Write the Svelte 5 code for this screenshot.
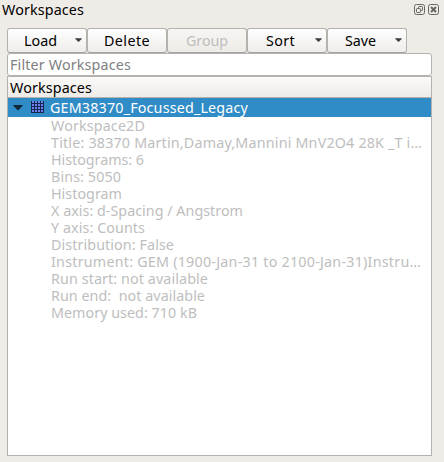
<script>
  const buttons = [
    { label: 'Load', width: 33, pad: 16, menu: true },
    { label: 'Delete', width: 46, pad: 16 },
    { label: 'Group', width: 42, pad: 18, disabled: true },
    { label: 'Sort', width: 29, pad: 18, menu: true },
    { label: 'Save', width: 31, pad: 17, menu: true }
  ];

  const details = [
    ['Workspace2D', 94],
    ['Title: 38370 Martin,Damay,Mannini MnV2O4 28K _T i…', 371],
    ['Histograms: 6', 93],
    ['Bins: 5050', 70],
    ['Histogram', 71],
    ['X axis: d-Spacing / Angstrom', 192],
    ['Y axis: Counts', 94],
    ['Distribution: False', 123],
    ['Instrument: GEM (1900-Jan-31 to 2100-Jan-31)Instru…', 370],
    ['Run start: not available', 157],
    ['Run end:  not available', 154],
    ['Memory used: 710 kB', 146]
  ];

  // Spread or tighten the letters so that a label fills its width.
  function fit(node, width) {
    const natural = node.getBoundingClientRect().width;
    node.style.letterSpacing = `${(width - natural) / node.textContent.length}px`;
  }
</script>

<div class="dock">
  <header class="titlebar">
    <span class="label" use:fit={82}>Workspaces</span>
    <div class="controls">
      <svg width="11" height="11" viewBox="0 0 11 11" fill="none" stroke="#686764">
        <rect x=".5" y=".5" width="10" height="10" rx="2" />
        <rect x="4.5" y="2.5" width="4" height="4" rx=".7" />
        <rect x="2.5" y="4.5" width="4" height="4" rx=".7" fill="#efebe7" />
      </svg>
      <svg width="11" height="11" viewBox="0 0 11 11" fill="none" stroke="#686764">
        <rect x=".5" y=".5" width="10" height="10" rx="2" />
        <path d="M3 3l5 5M8 3l-5 5" stroke-width="2" />
      </svg>
    </div>
  </header>

  <div class="toolbar">
    {#each buttons as b}
      <button class:disabled={b.disabled} style:padding-left="{b.pad}px">
        <span class="label" use:fit={b.width}>{b.label}</span>
        {#if b.menu}
          <svg class="arrow" width="7" height="4" viewBox="0 0 7 4"><path d="M.3 .2h6.4v.8L3.5 4 .3 1z" fill="#3c3c3c" /></svg>
        {/if}
      </button>
    {/each}
  </div>

  <div class="filter"><span class="label" use:fit={121}>Filter Workspaces</span></div>

  <div class="tree">
    <div class="head"><span class="label" use:fit={82}>Workspaces</span></div>
    <div class="selected">
      <svg class="expander" width="10" height="6" viewBox="0 0 10 6"><path d="M.3 0h9.4v.8L5 5.4 .3 .8z" fill="#12293a" /></svg>
      <svg class="grid" width="13" height="12" viewBox="0 0 13 12">
        <rect width="13" height="12" fill="#6b83ee" />
        <path d="M.5 0v12M3.5 0v12M6.5 0v12M9.5 0v12M12.5 0v12M0 2.5h13M0 5.5h13M0 8.5h13M0 11.5h13" stroke="#14264f" />
      </svg>
      <span class="label" use:fit={198}>GEM38370_Focussed_Legacy</span>
    </div>
    <div class="details">
      {#each details as [text, width]}
        <div class="row"><span class="label" use:fit={width}>{text}</span></div>
      {/each}
    </div>
  </div>
</div>

<style>
  :global(body) { margin: 0; background: #efebe7; }
  .dock {
    box-sizing: border-box;
    width: 444px;
    height: 462px;
    overflow: hidden;
    padding-bottom: 6px;
    display: flex;
    flex-direction: column;
    background: #efebe7;
    color: #000;
    font: 14.3px/17px "Noto Sans", "Open Sans", sans-serif;
  }
  .label { display: inline-block; white-space: pre; flex: none; }
  .titlebar {
    flex: none;
    box-sizing: border-box;
    height: 28px;
    padding: 1px 5px 0 2px;
    display: flex;
    justify-content: space-between;
    align-items: flex-start;
  }
  .controls { display: flex; gap: 3px; padding-top: 3px; }
  .controls svg { display: block; }
  .toolbar { flex: none; display: flex; height: 25px; padding-left: 7px; }
  button {
    box-sizing: border-box;
    width: 80px;
    height: 25px;
    margin: 0;
    padding: 0 4px 0 17px;
    border: 1px solid #b5b2ae;
    border-bottom-color: #a5a29f;
    border-radius: 3px;
    background: linear-gradient(#fefefe, #efedeb);
    display: flex;
    align-items: center;
    justify-content: space-between;
    font: inherit;
    color: inherit;
  }
  button.disabled { color: #bebebe; background: linear-gradient(#f7f5f3, #efebe7); }
  .arrow { margin-top: -2px; }
  .filter {
    flex: none;
    box-sizing: border-box;
    width: 425px;
    height: 23px;
    margin-left: 7px;
    padding: 2px 2px 0;
    border: 1px solid #b4b1ae;
    border-radius: 3px;
    background: #fff;
    color: #808080;
  }
  .tree {
    flex: 1;
    box-sizing: border-box;
    width: 425px;
    margin-left: 7px;
    border: 1px solid #b4b2b0;
    background: #fff;
  }
  .head {
    box-sizing: border-box;
    height: 21px;
    padding: 2px 2px 0;
    border-bottom: 1px solid #b4b1ae;
    background: linear-gradient(#fcfbfa, #eeebe8);
  }
  .selected {
    height: 19px;
    padding-left: 5px;
    display: flex;
    align-items: center;
    background: #308cc6;
    color: #fff;
  }
  .expander { margin-right: 8px; margin-top: 1px; }
  .grid { margin-right: 6px; margin-bottom: 1px; }
  .details { padding-left: 43px; color: #bebebe; }
  .row { height: 17px; display: flex; }
</style>
